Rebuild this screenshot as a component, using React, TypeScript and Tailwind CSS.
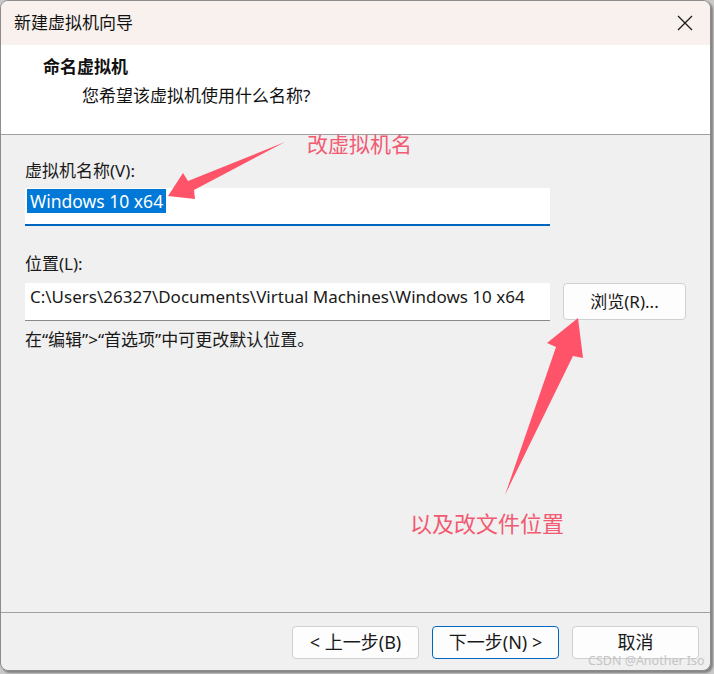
import React from "react"

const cjk = { fontFamily: '"Noto Sans", "Noto Sans CJK SC", sans-serif' }

function CloseIcon() {
  return (
    <svg width="16" height="16" viewBox="0 0 16 16" className="text-[#1a1a1a]">
      <path d="M1 1 L15 15 M15 1 L1 15" stroke="currentColor" strokeWidth="1.3" fill="none" />
    </svg>
  )
}

function DialogButton({ children, primary }: { children: React.ReactNode; primary?: boolean }) {
  return (
    <button
      className={
        primary
          ? "h-[33px] w-[127px] rounded-[4px] border border-[#0067c0] bg-[#fdfdfd] text-[18px] text-[#1a1a1a]"
          : "h-[33px] w-[127px] rounded-[4px] border border-[#d0d0d0] bg-[#fdfdfd] text-[18px] text-[#1a1a1a]"
      }
    >
      {children}
    </button>
  )
}

function Annotations() {
  return (
    <div className="pointer-events-none absolute inset-0">
      <svg width="714" height="674" className="absolute left-0 top-0">
        <polygon
          points="168,196 183,173 188,181 285,142 194,190 195,199"
          fill="#ff5369"
        />
        <polygon
          points="578,318 547,343 556,347 505,495 573,356 583,358"
          fill="#ff5369"
        />
      </svg>
      <div className="absolute left-[307px] top-[130px] text-[21px] leading-[28px] text-[#f25a72]">
        改虚拟机名
      </div>
      <div className="absolute left-[410px] top-[509px] text-[22px] leading-[28px] text-[#f25a72]">
        以及改文件位置
      </div>
      <div className="absolute left-[588px] top-[653px] text-[12.5px] leading-[16px] text-[#c4c4c4]">
        CSDN @Another Iso
      </div>
    </div>
  )
}

export default function App() {
  return (
    <div className="relative h-[674px] w-[714px] overflow-hidden bg-[#c9c9c9]" style={cjk}>
      <div className="flex h-[671px] w-[711px] flex-col overflow-hidden rounded-[8px] border border-[#8c8c8c] bg-[#f0f0f0] shadow-[2px_2px_2px_rgba(0,0,0,0.35)]">
        {/* title bar */}
        <div className="flex h-[44px] shrink-0 items-center justify-between bg-[#f9f1ed] pl-[13px] pr-[17px]">
          <span className="text-[17px] text-[#111]">新建虚拟机向导</span>
          <CloseIcon />
        </div>

        {/* header */}
        <div className="h-[90px] shrink-0 border-b border-[#a0a0a0] bg-white pl-[42px] pt-[10px]">
          <div className="text-[17px] font-bold leading-[24px] text-[#111]">命名虚拟机</div>
          <div className="mt-[5px] pl-[39px] text-[17px] leading-[24px] text-[#111]">
            您希望该虚拟机使用什么名称?
          </div>
        </div>

        {/* body */}
        <div className="flex-1 px-[24px] pt-[24px] text-[17px] text-[#1a1a1a]">
          <div className="leading-[24px]">虚拟机名称(V):</div>
          <div className="mt-[5px] h-[38px] w-[525px] border-b-2 border-[#0067c0] bg-white pl-[2px] pt-[1px]">
            <span className="bg-[#0078d7] px-[3px] text-[17.5px] leading-[21px] text-white">Windows 10 x64</span>
          </div>

          <div className="mt-[26px] leading-[24px]">位置(L):</div>
          <div className="mt-[7px] flex items-start gap-[13px]">
            <div className="h-[38px] w-[525px] border-b border-[#8a8a8a] bg-white pl-[5px] pt-[2px] leading-[24px]">
              C:\Users\26327\Documents\Virtual Machines\Windows 10 x64
            </div>
            <button className="h-[37px] w-[123px] rounded-[4px] border border-[#d0d0d0] bg-[#fdfdfd] text-[17px] text-[#1a1a1a]">
              浏览(R)...
            </button>
          </div>

          <div className="mt-[7px] leading-[24px]">在“编辑”&gt;“首选项”中可更改默认位置。</div>
        </div>

        {/* footer */}
        <div className="flex h-[58px] shrink-0 items-start justify-end gap-[13px] border-t border-[#a0a0a0] pr-[11px] pt-[13px]">
          <DialogButton>&lt; 上一步(B)</DialogButton>
          <DialogButton primary>下一步(N) &gt;</DialogButton>
          <DialogButton>取消</DialogButton>
        </div>
      </div>
      <Annotations />
    </div>
  )
}
